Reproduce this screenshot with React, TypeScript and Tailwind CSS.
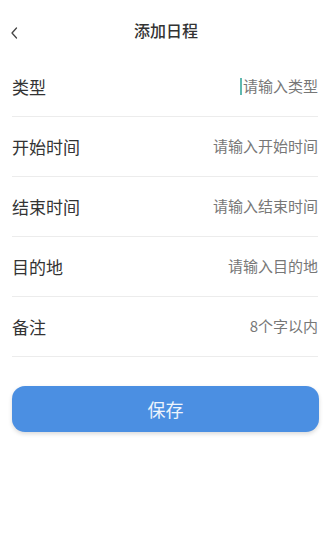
import React from "react";

const rows = [
  { label: "类型", value: "请输入类型", cursor: true },
  { label: "开始时间", value: "请输入开始时间" },
  { label: "结束时间", value: "请输入结束时间" },
  { label: "目的地", value: "请输入目的地" },
  { label: "备注", value: "8个字以内" },
];

export default function App() {
  return (
    <div
      className="w-[328px] h-[534px] bg-white overflow-hidden"
      style={{ fontFamily: '"Noto Sans CJK SC", "Noto Sans", sans-serif' }}
    >
      <div className="relative h-[57px] flex items-start justify-center pl-[4px] pt-[18px]">
        <svg
          className="absolute left-[10px] top-[27px]"
          width="9"
          height="12"
          viewBox="0 0 9 12"
          fill="none"
        >
          <path d="M6.5 1 L2 6 L6.5 11" stroke="#444" strokeWidth="1.3" strokeLinecap="round" strokeLinejoin="round" />
        </svg>
        <span className="text-[16px] leading-[24px] text-[#333] font-medium">添加日程</span>
      </div>
      <div className="pl-[12px] pr-[10px]">
        {rows.map((r) => (
          <div
            key={r.label}
            className="h-[60px] flex items-center justify-between border-b border-[#ececec]"
          >
            <span className="text-[17px] text-[#333]">{r.label}</span>
            <span className="flex items-center text-[15px] text-[#777]">
              {r.cursor && <span className="inline-block w-[1.5px] h-[17px] bg-[#5fb8b0] mr-[1px]" />}
              {r.value}
            </span>
          </div>
        ))}
      </div>
      <div className="pl-[12px] pr-[9px] pt-[29px]">
        <div className="h-[46px] rounded-[13px] bg-[#4b8fe2] flex items-center justify-center shadow-[0_2px_4px_rgba(0,0,0,0.15)]">
          <span className="text-[18px] text-[#eef4fc]">保存</span>
        </div>
      </div>
    </div>
  );
}
